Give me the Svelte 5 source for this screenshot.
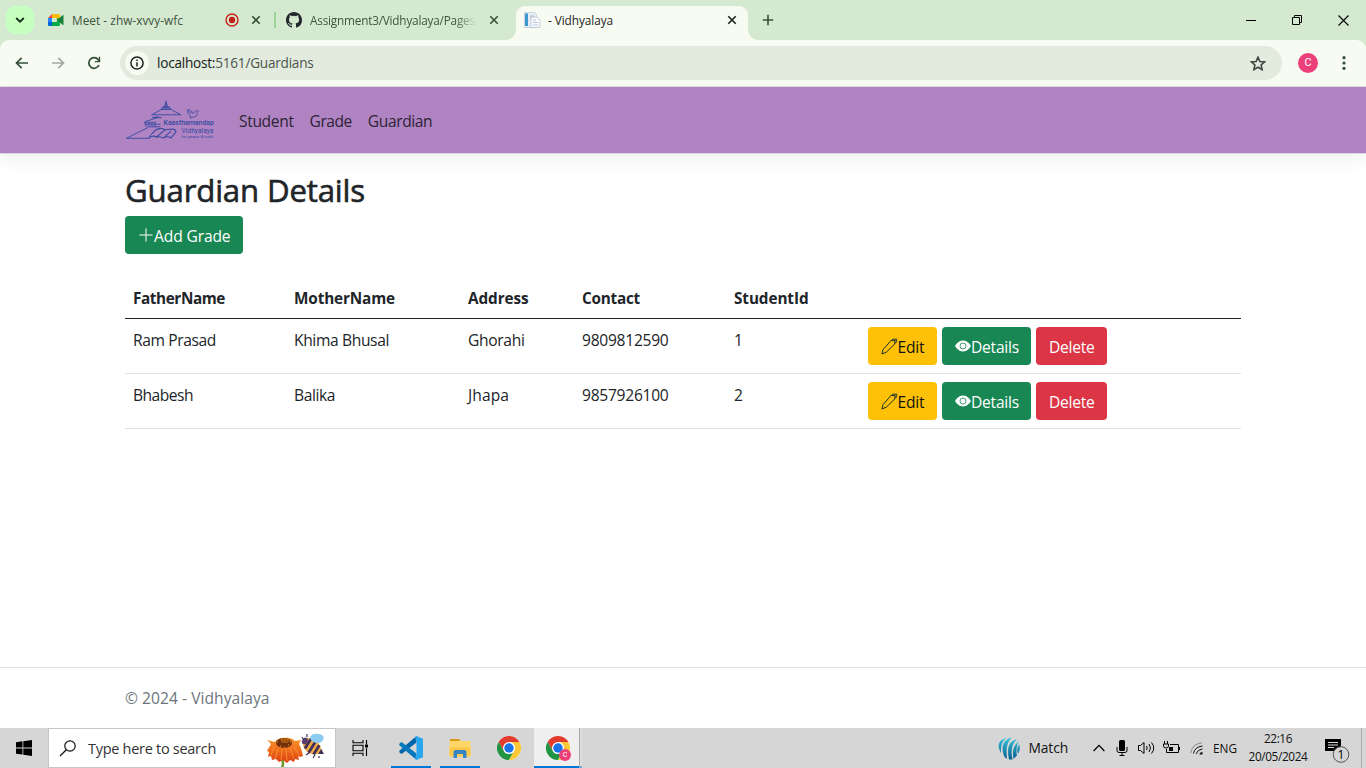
<script>
  const guardians = [
    { father: 'Ram Prasad', fw: 83, mother: 'Khima Bhusal', mw: 95, address: 'Ghorahi', aw: 56.5, contact: '9809812590', id: '1' },
    { father: 'Bhabesh', fw: 60, mother: 'Balika', mw: 41, address: 'Jhapa', aw: 41, contact: '9857926100', id: '2' }
  ];
  const columns = [
    { label: 'FatherName', w: 92 },
    { label: 'MotherName', w: 101 },
    { label: 'Address', w: 60.5 },
    { label: 'Contact', w: 58 },
    { label: 'StudentId', w: 74.5 }
  ];
  const links = [
    { label: 'Student', w: 54.6 },
    { label: 'Grade', w: 42.2 },
    { label: 'Guardian', w: 64.5 }
  ];

  // Tracks a label so that its run of glyphs takes the given width.
  function fit(node, width) {
    const natural = node.getBoundingClientRect().width;
    const count = node.textContent.length;
    node.style.letterSpacing = ((width - natural) / count).toFixed(3) + 'px';
  }
</script>

{#snippet close(color)}
  <svg class="close" width="10" height="10" viewBox="0 0 10 10"><path d="M1.3 1.3l7.4 7.4M8.7 1.3L1.3 8.7" stroke={color} stroke-width="1.6" /></svg>
{/snippet}

{#snippet chrome(size)}
  <svg width={size} height={size} viewBox="0 0 48 48">
    <circle cx="24" cy="24" r="24" fill="#fff" />
    <path d="M24 12h20.8A24 24 0 0 0 3.2 12l10.4 18z" fill="#e33b2e" />
    <path d="M13.6 30L3.2 12A24 24 0 0 0 24 48l10.4-18A12 12 0 0 1 13.6 30z" fill="#229342" />
    <path d="M34.4 30L24 48A24 24 0 0 0 44.8 12H24a12 12 0 0 1 10.4 18z" fill="#fcc934" />
    <circle cx="24" cy="24" r="12" fill="#fff" /><circle cx="24" cy="24" r="9.5" fill="#1a73e8" />
  </svg>
{/snippet}

<div class="screen">
  <header class="tabs">
    <button class="search-tabs" aria-label="Search tabs"><svg width="10" height="6" viewBox="0 0 10 6"><path d="M1.2 1l3.8 3.6L8.8 1" fill="none" stroke="#17301a" stroke-width="1.9" /></svg></button>
    <div class="tab first">
      <svg width="16" height="16" viewBox="0 0 16 16">
        <path d="M0 6l4.2-4v4z" fill="#ea4335" /><path d="M4 2h6.5q1.5 0 1.5 1.3V6.6L8.9 9.2V6H4z" fill="#fbbc04" />
        <path d="M0 6h4v4H0z" fill="#2684fc" /><path d="M0 10h4v4H1.3Q0 14 0 12.7z" fill="#0066da" />
        <path d="M4 10h4.9V6L12 7v5.7q0 1.3-1.3 1.3H4z" fill="#00ac47" /><path d="M8.9 8L14.6 3.2q.9-.5.9.5v8.7q0 1-.9.4z" fill="#188038" />
      </svg>
      <span class="title"><span use:fit={111}>Meet - zhw-xvvy-wfc</span></span>
      <svg class="rec" width="14" height="14" viewBox="0 0 14 14"><circle cx="7" cy="7" r="6" fill="none" stroke="#c4231d" stroke-width="1.4" /><circle cx="7" cy="7" r="3.2" fill="#c4231d" /></svg>
      {@render close('#35503a')}
    </div>
    <i class="divider"></i>
    <div class="tab second">
      <svg width="16" height="16" viewBox="0 0 16 16"><path fill="#22272e" d="M8 0C3.58 0 0 3.58 0 8c0 3.54 2.29 6.53 5.47 7.59.4.07.55-.17.55-.38 0-.19-.01-.82-.01-1.49-2.01.37-2.53-.49-2.69-.94-.09-.23-.48-.94-.82-1.13-.28-.15-.68-.52-.01-.53.63-.01 1.08.58 1.23.82.72 1.21 1.87.87 2.33.66.07-.52.28-.87.51-1.07-1.78-.2-3.64-.89-3.64-3.95 0-.87.31-1.59.82-2.15-.08-.2-.36-1.02.08-2.12 0 0 .67-.21 2.2.82a7.6 7.6 0 0 1 4 0c1.53-1.04 2.2-.82 2.2-.82.44 1.1.16 1.92.08 2.12.51.56.82 1.27.82 2.15 0 3.07-1.87 3.75-3.65 3.95.29.25.54.73.54 1.48 0 1.07-.01 1.93-.01 2.2 0 .21.15.46.55.38A8 8 0 0 0 16 8c0-4.42-3.58-8-8-8z" /></svg>
      <span class="title faded"><span use:fit={169}>Assignment3/Vidhyalaya/Pages/</span></span>
      {@render close('#35503a')}
    </div>
    <div class="tab active">
      <svg width="17" height="16" viewBox="0 0 17 16">
        <path d="M.5.5h10l2 2v13H.5z" fill="#e6edf5" stroke="#b9c8d6" stroke-width=".7" /><path d="M1 1.5h3v12.5H1z" fill="#3f97cf" />
        <path d="M6 4h4M6 6h3" stroke="#aab9ce" /><path d="M7 5h6l3 3v7.5H7z" fill="#f8fafd" stroke="#aebccc" stroke-width=".7" /><path d="M9 8h3M9 10.5h5M9 13h5" stroke="#b5c4dc" />
      </svg>
      <span class="title"><span use:fit={65}>- Vidhyalaya</span></span>
      {@render close('#15251a')}
    </div>
    <svg class="plus" width="12" height="12" viewBox="0 0 12 12"><path d="M6 .8v10.4M.8 6h10.4" stroke="#35503a" stroke-width="1.6" /></svg>
    <div class="window">
      <svg width="10" height="12" viewBox="0 0 10 12"><path d="M0 6.5h10" stroke="#000" /></svg>
      <svg width="10" height="10" viewBox="0 0 10 10"><path d="M.5 2.5h7v7h-7zM2.5 2.5v-2h7v7h-2" fill="none" stroke="#000" /></svg>
      <svg width="11" height="11" viewBox="0 0 11 11"><path d="M.5.5l10 10M10.5.5l-10 10" stroke="#000" stroke-width="1.1" /></svg>
    </div>
  </header>

  <div class="toolbar-wrap"><div class="toolbar">
    <svg width="14" height="12" viewBox="0 0 14 12"><path d="M13 6H1.8M6.7 .8L1.5 6l5.2 5.2" fill="none" stroke="#35503a" stroke-width="1.7" /></svg>
    <svg width="14" height="12" viewBox="0 0 14 12"><path d="M1 6h11.2M7.3 .8L12.5 6l-5.2 5.2" fill="none" stroke="#a1aba0" stroke-width="1.7" /></svg>
    <svg width="14" height="14" viewBox="0 0 14 14"><path d="M12 9A5.3 5.3 0 1 1 11.2 3.6L12.4 5" fill="none" stroke="#35503a" stroke-width="1.8" /><path d="M13.2.8v5.4H7.8V4.9h4V.8z" fill="#35503a" /></svg>
    <div class="address">
      <span class="info"><svg width="14" height="14" viewBox="0 0 14 14"><circle cx="7" cy="7" r="6.1" fill="none" stroke="#1c211d" stroke-width="1.5" /><path d="M7 6.2v4.3M7 3.4v1.5" stroke="#1c211d" stroke-width="1.5" /></svg></span>
      <span class="url" use:fit={156.5}><b>localhost:</b>5161/Guardians</span>
      <svg class="star" width="16" height="15" viewBox="0 0 16 15"><path d="M8 1.2l1.9 4.3 4.7.4-3.500 3.100 1 4.600L8 11.200l-4.100 2.400 1-4.600L1.400 5.900l4.700-.4z" fill="none" stroke="#3c473e" stroke-width="1.6" /></svg>
    </div>
    <span class="avatar">C</span>
    <svg class="dots" width="4" height="14" viewBox="0 0 4 14"><g fill="#35503a"><circle cx="2" cy="1.7" r="1.6" /><circle cx="2" cy="7" r="1.6" /><circle cx="2" cy="12.3" r="1.6" /></g></svg>
  </div></div>

  <div class="page">
    <nav>
      <svg class="logo" width="92" height="44" viewBox="125 98 92 44" fill="none" stroke="#364a9e" stroke-width=".9">
        <path d="M166 100.5v2M166 102l-1.8 5h3.6zM162.5 107l-1.3 2.5h9.6l-1.3-2.5z" fill="#364a9e" fill-opacity=".5" />
        <path d="M161.5 109.5l-10 5.3h29.5l-10-5.3M155.500 116.500l5 1.500" />
        <path d="M159 117.200l-13.500 4.300-1.500 1.200h3M152 117.500h9.500M146 123.500v3.500M149 123v4M152 123v4M155 123v4M144.500 124.200h16M147 122.300h9M148 126.800h12.500" />
        <path d="M148 127.500l-21.500 10.800h22l4.500-6.200" />
        <path d="M149 138.5c1-2.500 5-3 7.500-1.500l8.500-7.200c-3-2-8-1.500-10.500 1l-2 2.500M165 129.800l8-.8c2 .5 3 1.500 3 2.800l-5 6.200c-2-1.800-5.500-1.500-7.500.2l7.500-7M157 137c2-.5 4.500-.2 6.500 1.200" stroke-width="1.1" />
        <path d="M187.500 110c1.500 2.500 3.500 3.200 5.500 3M189 109.500l4.500 3.500 3-2.500 2 .5-1.200 1.500c0 3.200-1.800 4.800-4.500 4.700l-2.800.8.5-2.200c-2-.8-3-2.800-3-5.800z" stroke-width=".8" />
        <g fill="#364a9e" stroke="none" font-family="Roboto">
          <text x="163.5" y="124.800" font-size="7.6" font-weight="500" textLength="50.5" lengthAdjust="spacingAndGlyphs">Kaasthamandap</text>
          <text x="181.5" y="132.700" font-size="8" font-weight="400" textLength="32" lengthAdjust="spacingAndGlyphs">Vidhyalaya</text>
          <text x="181.5" y="138.300" font-size="4.200" textLength="31.500" lengthAdjust="spacingAndGlyphs">for peace &amp; truth</text>
        </g>
      </svg>
      {#each links as link}<a href="#top"><span use:fit={link.w}>{link.label}</span></a>{/each}
    </nav>
    <main>
      <h1><span use:fit={240}>Guardian Details</span></h1>
      <button class="btn add">
        <svg width="16" height="16" viewBox="0 0 16 16"><path d="M8 1.8v12.4M1.8 8h12.4" stroke="#fff" stroke-linecap="round" /></svg><span use:fit={76.5}>Add Grade</span>
      </button>
      <div class="row head">
        {#each columns as c}<div><span use:fit={c.w}>{c.label}</span></div>{/each}<div></div>
      </div>
      {#each guardians as g}
        <div class="row">
          <div><span use:fit={g.fw}>{g.father}</span></div>
          <div><span use:fit={g.mw}>{g.mother}</span></div>
          <div><span use:fit={g.aw}>{g.address}</span></div>
          <div><span use:fit={86.5}>{g.contact}</span></div>
          <div>{g.id}</div>
          <div class="actions">
            <button class="btn edit">
              <svg width="17" height="17" viewBox="0 0 17 17" fill="none" stroke="#172f2e"><path d="M.9 16l1.200-4.500L10.300 2.200q1-1 2.300-1h3.100v1.300q0 1.300-1.200 2.700L5.300 14.200zM10.500 2.500l3.800.2-.8 3" stroke-width="1" /></svg><span use:fit={27}>Edit</span>
            </button>
            <button class="btn details">
              <svg width="16" height="16" viewBox="0 0 16 16"><path d="M0 8s3-5.500 8-5.500S16 8 16 8s-3 5.500-8 5.500S0 8 0 8z" fill="#fff" /><circle cx="8" cy="8" r="3" fill="#fff" stroke="#198754" stroke-width=".8" /></svg><span use:fit={48}>Details</span>
            </button>
            <button class="btn delete"><span use:fit={45.5}>Delete</span></button>
          </div>
        </div>
      {/each}
    </main>
    <footer><span use:fit={144.500}>© 2024 - Vidhyalaya</span></footer>
  </div>

  <div class="taskbar">
    <div class="start"><svg width="16" height="16" viewBox="0 0 16 16"><path d="M0 2.2l6.5-.9v6.2H0zM7.3 1.2L16 0v7.5H7.3zM0 8.4h6.5v6.2L0 13.700zM7.3 8.4H16V16l-8.7-1.200z" /></svg></div>
    <div class="search">
      <svg width="18" height="17" viewBox="0 0 18 17"><circle cx="11" cy="6" r="5.2" fill="none" stroke="#111" stroke-width="1.2" /><path d="M7.3 9.8L1 16" stroke="#111" stroke-width="1.3" /></svg>
      <span class="hint" use:fit={128}>Type here to search</span>
      <svg class="bloom" width="62" height="38" viewBox="264 729 62 38">
        <defs><linearGradient id="petal" x2="0" y2="1"><stop stop-color="#f79a2c" /><stop offset=".45" stop-color="#f0701d" /><stop offset="1" stop-color="#dc3d12" /></linearGradient></defs>
        <path d="M282 759q2 4 0 9" fill="none" stroke="#6c9b22" stroke-width="2.500" />
        <path d="M267 740l8 2c2-5 16-6 20-1l6-1-2 4c2 3 3 8 4 12l-3 1-2-1 1 4-4-1-1 3-4-2-3 3-4-3-4 2-3-3-4 1-1-4-3 1 1-5-2-1 4-7z" fill="url(#petal)" />
        <path d="M274 747l-3 8M278 749l-3 10M282 749l-1 11M286 749l1 12M290 748l4 11M294 747l5 8" stroke="#ffa63a" stroke-width=".9" opacity=".75" />
        <ellipse cx="284" cy="743" rx="8" ry="5" fill="#70300f" /><ellipse cx="285" cy="740.500" rx="4.500" ry="2.600" fill="#a5590f" /><path d="M277 742h1M280 746h1M284 747h1M288 745h1M290 742h1M281 739h1M287 738h1" stroke="#f5a524" stroke-width="1.200" />
        <g transform="rotate(32 313 746)"><path d="M303 743q9-7 17 0l4 4q-4 6-10 7-7 1-11-5z" fill="#f3ad48" /><path d="M307.500 740.500v12M312.800 740v14M318 742v11" stroke="#443057" stroke-width="2.800" /><path d="M321.500 744l5 3-5 3z" fill="#443057" /><ellipse cx="303.500" cy="746" rx="2.800" ry="3.600" fill="#59406e" /></g>
        <path d="M304 740l-2-3M307 737l0-3M309 753l-3 2M315 755l-2 3M319 756v2" stroke="#443057" stroke-width="1.200" />
        <path d="M310 738c1-5 8-5 12-3 4 3 0 8-4 8s-7-2-8-5z" fill="#8bcdf2" />
      </svg>
    </div>
    <div class="app view"><svg width="17" height="16" viewBox="0 0 17 16" fill="none" stroke="#000" stroke-width="1.100"><path d="M1 0v2.800h10V0M1 16v-2.800h10V16M1 5.200h10v5.600H1zM14.500 0v4M14.500 8v8" /><path d="M13 4.500h3v3h-3z" fill="#000" stroke="none" /></svg></div>
    <div class="app open"><svg width="24" height="24" viewBox="0 0 24 24"><path d="M17.5 0v6.400L3.300 17.500 2 17.800.3 16.300v-1.500z" fill="#0065a9" /><path d="M17.5 24v-6.400L3.300 6.500 2 6.200.3 7.700v1.500z" fill="#0879bd" /><path d="M17.5 0L24 2.800v18.400L17.500 24l-1.400-1.200 1.400-4.700V6l-1.400-4.800z" fill="#29a6ee" /></svg></div>
    <div class="app open"><svg width="22" height="20" viewBox="0 0 22 20"><path d="M1 1h9l1.500 2H1z" fill="#d99b11" /><path d="M.5 3h21v14.500q0 1-1 1H1.500q-1 0-1-1z" fill="#ffd665" /><path d="M.5 9h21v8.500q0 1-1 1H1.500q-1 0-1-1z" fill="#fdc94d" /><path d="M4.500 20v-6q0-2 2-2h9q2 0 2 2v6h-3.500v-4H8v4z" fill="#3686c5" /></svg></div>
    <div class="app last">{@render chrome(24)}</div>
    <div class="app current">{@render chrome(24)}<span class="badge">C</span></div>
    <i class="stack"></i>

    <div class="tray">
      <svg width="22" height="23" viewBox="0 0 22 23"><defs><linearGradient id="sea" x2="0" y2="1"><stop stop-color="#35c6dd" /><stop offset="1" stop-color="#075d91" /></linearGradient></defs><path d="M3 16C-1.500 9 .5 3 8 1 3.500 5 2.800 10 3 16zM6.500 20C2.500 10 5 3 14 .3 8.500 6 8 12 9 22zM11 22.500C8.500 11 11 4 19 2c-5 5-6.500 11-4.500 20.500zM15.500 22c-1.500-9 .3-14 5-17.500-2 5-2.500 10-1.500 14zM20 17c-1.200-4-.8-7 1.300-9.500.9 3.500.5 6.500-1.300 9.500z" fill="url(#sea)" /></svg>
      <span class="match" use:fit={39.500}>Match</span>
      <svg class="caret" width="12" height="8" viewBox="0 0 12 8"><path d="M.6 7L6 1.400 11.400 7" fill="none" stroke="#000" stroke-width="1.300" /></svg>
      <svg class="mic" width="12" height="16" viewBox="0 0 12 16"><rect x="3" width="6" height="11" rx="1.500" /><path d="M1 7v3.500q0 2 2 2h6q2 0 2-2V7M6 12v4M3.500 15.500h5" fill="none" stroke="#000" /></svg>
      <svg class="vol" width="17" height="14" viewBox="0 0 17 14" fill="none" stroke="#000"><path d="M.5 4.500h2L6 1.500v11l-3.500-3h-2zM8.500 5q1.500 2 0 4M11 3q3 4 0 8M13.500 1.500q4.500 5.500 0 11" /></svg>
      <svg class="bat" width="17" height="14" viewBox="0 0 17 14" fill="none" stroke="#000"><path d="M7 3.500h8.500v8H3.500V8M1.500 0v3M4.500 0v3M.5 3h5v2q0 2-2.500 2T.5 5zM16.500 6v3" /><path d="M6 6h4v4H6z" fill="#000" stroke="none" /></svg>
      <svg class="wifi" width="13" height="13" viewBox="0 0 13 13" fill="none"><path d="M.7 11Q2 2 12 .8" stroke="#8b8b8b" /><path d="M3.500 11.500q1-6.500 9-7.500M6.500 12q.5-4 6-5" stroke="#111" /><path d="M9.500 12.500q0-2.500 3-2.500v2.500z" fill="#111" /></svg>
      <span class="lang"><span use:fit={24}>ENG</span></span>
      <div class="clock"><span use:fit={28}>22:16</span><span use:fit={59}>20/05/2024</span></div>
      <div class="notice"><svg width="25" height="26" viewBox="0 0 25 26"><path d="M0 1h16v12h-4v3.500L8.500 13H0z" /><path d="M3 4.500h10M3 7h10M3 9.500h6" stroke="#ddd" /><circle cx="16" cy="16.500" r="7.800" fill="#d6d6d6" stroke="#555" /><text x="16" y="21" text-anchor="middle" font-family="Open Sans" font-size="12">1</text></svg></div>
    </div>
  </div>
</div>

<style>
  :global(body) { margin: 0; overflow: hidden; background: #fff; }
  * { box-sizing: border-box; }
  svg { flex: none; display: block; }
  button { border: 0; padding: 0; font: inherit; }
  .screen { width: 1366px; height: 768px; display: flex; flex-direction: column; font: 15.600px/24px "Open Sans", sans-serif; color: #212529; white-space: nowrap; overflow: hidden; }
  .screen span { display: inline-block; }
  .tabs { height: 40px; background: #d5e8d0; display: flex; align-items: center; font-size: 11.800px; color: #3c553f; flex: none; padding-left: 6px; }
  .search-tabs { width: 28px; height: 28px; border-radius: 9px; background: #c7ffc0; display: grid; place-items: center; }
  .tab { display: flex; align-items: center; height: 34px; }
  .title { flex: 1; margin-left: 8px; }
  .first { width: 213px; margin-left: 14px; }
  .rec { margin-right: 12px; }
  .divider { width: 2px; height: 16px; margin-left: 13px; background: #9ed398; }
  .second { width: 213px; margin-left: 10px; }
  .screen .faded { flex: none; width: 169px; margin-right: 10px; -webkit-mask-image: linear-gradient(90deg, #000 145px, transparent 167px); mask-image: linear-gradient(90deg, #000 145px, transparent 167px); }
  .active { align-self: flex-end; width: 232px; margin-left: 17px; padding: 0 11px 6px 8px; background: #f8fbf2; border-radius: 9px 9px 0 0; color: #1b251d; position: relative; }
  .active::before, .active::after { content: ''; position: absolute; bottom: 0; width: 10px; height: 10px; }
  .active::before { left: -10px; background: radial-gradient(circle at 0 0, #d5e8d0 9.500px, #f8fbf2 10px); }
  .active::after { right: -10px; background: radial-gradient(circle at 100% 0, #d5e8d0 9.500px, #f8fbf2 10px); }
  .active .title { margin-left: 7px; }
  .plus { margin-left: 14px; }
  .window { margin-left: auto; padding-right: 17px; display: flex; align-items: center; gap: 36px; }
  .toolbar-wrap { flex: none; background: #d5e8d0; }
  .toolbar { height: 47px; padding: 0 20px 0 15px; border-bottom: 1px solid #d8dfd2; background: #f8fbf2; border-radius: 9px 9px 0 0; display: flex; align-items: center; gap: 22px; }
  .address { width: 1162px; height: 34px; margin-left: -3px; border-radius: 17px; background: #e3ebdf; display: flex; align-items: center; padding: 0 16px 0 5px; font-size: 13.600px; color: #4c554d; }
  .screen .info { width: 24px; height: 24px; border-radius: 50%; background: #f8fbf2; display: grid; place-items: center; margin-right: 8px; }
  .url b { font-weight: 400; color: #17221a; }
  .star { margin-left: auto; }
  .avatar { width: 20px; height: 20px; border-radius: 50%; background: #ec407a; color: #fff; font: 11px/20px Roboto, sans-serif; text-align: center; margin-left: -6px; }
  .dots { margin-left: 2px; }

  .page { height: 641px; display: flex; flex-direction: column; flex: none; }
  nav { height: 67px; flex: none; background: #b083c3; border-bottom: 1px solid #dcd3e4; box-shadow: 0 8px 16px rgba(0, 0, 0, .05); padding: 0 125px; background-clip: padding-box; display: flex; align-items: center; }
  .logo { margin-right: 14px; overflow: visible; }
  nav a { padding: 1px 8px 0; text-decoration: none; color: #2d2435; }
  main { flex: 1; padding: 16px 125px 0; }
  h1 { margin: 0 0 8px; height: 38px; font-size: 31.200px; line-height: 40px; font-weight: 400; -webkit-text-stroke: .6px #212529; }
  .btn { height: 38px; border-radius: 4px; padding: 0 13px; display: inline-flex; align-items: center; color: #fff; }
  .btn span { padding-top: 1px; }
  .add { width: 118px; background: #198754; }
  .row { display: grid; grid-template-columns: 161px 174px 114px 152px 134px 1fr; height: 55px; border-bottom: 1px solid #dee2e6; line-height: 26px; }
  .row > div { padding: 8px; }
  .head { height: 40px; margin-top: 25px; border-color: #212529; font-weight: 700; font-size: 15.300px; line-height: 24px; }
  .row.head > div { padding-top: 7px; }
  .row .actions { display: flex; gap: 5px; line-height: 24px; }
  .edit { background: #ffc107; color: #111; width: 69px; }
  .details { background: #198754; width: 89px; }
  .delete { background: #dc3545; width: 71px; }
  .edit svg { margin-right: -.5px; }
  footer { height: 61px; border-top: 1px solid #dee2e6; padding-left: 125px; line-height: 61px; color: #6c757d; }

  .taskbar { height: 40px; background: #d6d6d6; display: flex; flex: none; color: #111; }
  .start { width: 48px; display: grid; place-items: center; }
  .search { width: 288px; background: #fff; border: 1px solid #c6c6c6; display: flex; align-items: center; padding-left: 10px; font-size: 14.500px; color: #333; }
  .hint { margin-left: 11px; padding-top: 1px; }
  .bloom { margin-left: auto; margin-right: 9px; }
  .app { width: 49px; display: grid; place-items: center; position: relative; }
  .view { margin-right: 1px; }
  .open::after { content: ''; position: absolute; bottom: 0; left: 5px; width: 40px; height: 2px; background: #0078d7; }
  .last { margin-right: 1px; }
  .current { width: 45px; background: #efefef; border-bottom: 2px solid #0078d7; padding: 2px 0 0 3px; }
  .badge { position: absolute; right: 8px; bottom: 5px; width: 12px; height: 12px; border-radius: 50%; background: #ec407a; color: #fff; font: 7px/12px Roboto, sans-serif; text-align: center; }
  .stack { width: 3px; background: #ddd; border-left: 1px solid #aaa; border-bottom: 2px solid #68aee4; }
  .tray { margin-left: auto; display: flex; align-items: center; }
  .match { margin-left: 9px; font-size: 13.800px; }
  .caret { margin-left: 25px; }
  .mic { margin-left: 11px; }
  .vol { margin-left: 10px; }
  .bat { margin-left: 8px; }
  .wifi { margin-left: 10px; }
  .lang { margin-left: 10px; font-size: 11.800px; }
  .clock { width: 60px; margin-left: 11px; font-size: 11.800px; line-height: 18px; display: flex; flex-direction: column; align-items: center; padding-bottom: 2px; }
  .notice { margin-left: 17px; width: 37px; height: 40px; border-right: 1px solid #aaa; margin-right: 4px; padding-top: 10px; }
</style>
